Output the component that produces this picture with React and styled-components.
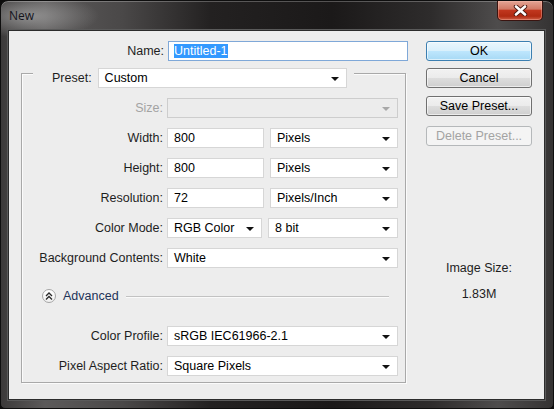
import styled, { createGlobalStyle } from 'styled-components';

const GlobalStyle = createGlobalStyle`
  html, body {
    margin: 0;
    padding: 0;
    background: #0c0c0c;
  }
  body {
    font-family: 'Liberation Sans', Arial, sans-serif;
    font-size: 12.5px;
    color: #1e1e1e;
  }
  * { box-sizing: border-box; }
`;

const Window = styled.div`
  width: 554px;
  height: 409px;
  display: flex;
  flex-direction: column;
  border: 1px solid #0e0e0e;
  border-radius: 8px 8px 5px 5px;
  background:
    radial-gradient(ellipse 70px 22px at 28px 15px, rgba(170, 170, 170, 0.7), rgba(120, 120, 120, 0) 100%),
    linear-gradient(90deg, #3c3a3a 0%, #5c5a5a 8%, #4a4848 22%, #232121 38%, #1b1919 60%, #2e2c2c 78%, #4e4c4c 90%, #353333 100%);
  box-shadow: inset 0 1px 0 rgba(255, 255, 255, 0.25);
`;

const TitleBar = styled.div`
  height: 29px;
  display: flex;
  justify-content: space-between;
  align-items: flex-start;
  padding-left: 8px;
`;

const Title = styled.span`
  margin-top: 8px;
  font-family: 'Open Sans', 'Liberation Sans', sans-serif;
  font-size: 12px;
  line-height: 14px;
  color: #14141c;
`;

const CloseButton = styled.div`
  width: 46px;
  height: 20px;
  margin-right: 10px;
  display: flex;
  align-items: center;
  justify-content: center;
  border: 1px solid #3a1410;
  border-top: none;
  border-radius: 0 0 5px 5px;
  background: linear-gradient(180deg, #e4a494 0%, #d27a66 42%, #c0361e 50%, #b02a12 80%, #cf5f46 100%);
  box-shadow: inset 0 0 0 1px rgba(255, 200, 190, 0.35);
`;

const Client = styled.div`
  flex: 1;
  margin: 0 8px 8px 7px;
  display: flex;
  align-items: flex-start;
  padding-top: 10px;
  background: #ededed;
  border: 1px solid #2c2c2c;
  box-shadow: 0 0 0 1px #5a5a5a;
`;

const LeftPane = styled.div`
  padding-left: 12px;
  display: flex;
  flex-direction: column;
`;

const NameRow = styled.div`
  display: grid;
  grid-template-columns: 143px 240px;
  column-gap: 4px;
  align-items: center;
  height: 20px;
`;

const Label = styled.span`
  text-align: right;
  white-space: nowrap;
  color: ${props => (props.$disabled ? '#a3a3a3' : '#1e1e1e')};
`;

const Field = styled.div`
  height: 20px;
  width: ${props => props.$width || 'auto'};
  flex: ${props => (props.$width ? 'none' : '1')};
  display: flex;
  align-items: center;
  padding-left: 6px;
  background: #fff;
  border: 1px solid #d6d6d6;
  color: #000;
  white-space: nowrap;
`;

const NameField = styled(Field)`
  border-color: #7fa8d8;
  padding-left: 5px;
`;

const Selected = styled.span`
  background: #3399ff;
  color: #fff;
  line-height: 14px;
`;

const Select = styled(Field)`
  position: relative;
  background: ${props => (props.$disabled ? '#ececec' : '#fff')};
  border-color: ${props => (props.$disabled ? '#cdcdcd' : '#d6d6d6')};

  &::after {
    content: '';
    position: absolute;
    right: 7px;
    top: 8px;
    border-left: 4px solid transparent;
    border-right: 4px solid transparent;
    border-top: 4px solid ${props => (props.$disabled ? '#a8a8a8' : '#111')};
  }
`;

const Group = styled.div`
  margin-top: 12px;
  width: 385px;
  display: flex;
  flex-direction: column;
  padding: 0 6px 6px 0;
  border: 1px solid #a9a9a9;
  box-shadow: inset 1px 1px 0 #fbfbfb, 1px 1px 0 #fbfbfb;
`;

const PresetRow = styled.div`
  align-self: flex-start;
  height: 21px;
  margin: -7px 0 0 11px;
  padding: 0 7px 0 19px;
  display: flex;
  align-items: center;
  gap: 6px;
  background: #ededed;
`;

const Row = styled.div`
  display: grid;
  grid-template-columns: 141px 231px;
  column-gap: 4px;
  align-items: center;
  height: 20px;
  margin-top: ${props => props.$gap || 10}px;
`;

const Pair = styled.div`
  display: flex;
  gap: 6px;
`;

const AdvancedRow = styled.div`
  height: 20px;
  margin-top: 18px;
  padding: 0 10px 0 20px;
  display: flex;
  align-items: center;
  gap: 7px;
`;

const RoundIcon = styled.div`
  width: 14px;
  height: 14px;
  border-radius: 50%;
  display: flex;
  align-items: center;
  justify-content: center;
  background: linear-gradient(180deg, #ffffff 0%, #f0f0f0 100%);
  border: 1px solid #a6a6a6;
`;

const AdvancedText = styled.span`
  color: #1d3358;
`;

const Rule = styled.div`
  flex: 1;
  height: 1px;
  background: #c2c2c2;
  box-shadow: 0 1px 0 #fafafa;
`;

const RightPane = styled.div`
  margin-left: 18px;
  width: 106px;
  display: flex;
  flex-direction: column;
`;

const Button = styled.div`
  height: 20px;
  margin-top: ${props => props.$gap || 0}px;
  display: flex;
  align-items: center;
  justify-content: center;
  border-radius: 3px;
  border: 1px solid ${props => (props.$primary ? '#3c7fb1' : props.$disabled ? '#b5b8ba' : '#707070')};
  background: ${props =>
    props.$primary
      ? 'linear-gradient(180deg, #eaf6fd 0%, #d9f0fc 50%, #bee6fd 51%, #a7d9f5 100%)'
      : props.$disabled
      ? '#f4f4f4'
      : 'linear-gradient(180deg, #f2f2f2 0%, #ebebeb 50%, #dddddd 51%, #cfcfcf 100%)'};
  color: ${props => (props.$disabled ? '#a3a3a3' : '#000')};
  box-shadow: inset 0 0 0 1px ${props => (props.$disabled ? 'transparent' : 'rgba(255,255,255,0.6)')};
`;

const Info = styled.div`
  margin-top: ${props => props.$gap}px;
  text-align: center;
  line-height: 14px;
  color: #1e1e1e;
`;

const CloseGlyph = () => (
  <svg width="15" height="11" viewBox="0 0 15 11">
    <path d="M3 1.5 L12 9.5 M12 1.5 L3 9.5" stroke="#4a1810" strokeWidth="4.4" strokeLinecap="round" />
    <path d="M3 1.5 L12 9.5 M12 1.5 L3 9.5" stroke="#ffffff" strokeWidth="2.6" strokeLinecap="round" />
  </svg>
);

const ChevronsUp = () => (
  <svg width="8" height="8" viewBox="0 0 8 8">
    <polyline points="1,4 4,1 7,4" fill="none" stroke="#2a2a2a" strokeWidth="1.3" />
    <polyline points="1,7.5 4,4.5 7,7.5" fill="none" stroke="#2a2a2a" strokeWidth="1.3" />
  </svg>
);

const App = () => {
  return (
    <>
      <GlobalStyle />
      <Window>
        <TitleBar>
          <Title>New</Title>
          <CloseButton>
            <CloseGlyph />
          </CloseButton>
        </TitleBar>
        <Client>
          <LeftPane>
            <NameRow>
              <Label>Name:</Label>
              <NameField>
                <Selected>Untitled-1</Selected>
              </NameField>
            </NameRow>

            <Group>
              <PresetRow>
                <Label>Preset:</Label>
                <Select $width="249px">Custom</Select>
              </PresetRow>

              <Row>
                <Label $disabled>Size:</Label>
                <Select $disabled />
              </Row>

              <Row>
                <Label>Width:</Label>
                <Pair>
                  <Field $width="97px">800</Field>
                  <Select>Pixels</Select>
                </Pair>
              </Row>

              <Row>
                <Label>Height:</Label>
                <Pair>
                  <Field $width="97px">800</Field>
                  <Select>Pixels</Select>
                </Pair>
              </Row>

              <Row>
                <Label>Resolution:</Label>
                <Pair>
                  <Field $width="97px">72</Field>
                  <Select>Pixels/Inch</Select>
                </Pair>
              </Row>

              <Row>
                <Label>Color Mode:</Label>
                <Pair>
                  <Select $width="95px">RGB Color</Select>
                  <Select>8 bit</Select>
                </Pair>
              </Row>

              <Row>
                <Label>Background Contents:</Label>
                <Select>White</Select>
              </Row>

              <AdvancedRow>
                <RoundIcon>
                  <ChevronsUp />
                </RoundIcon>
                <AdvancedText>Advanced</AdvancedText>
                <Rule />
              </AdvancedRow>

              <Row $gap={20}>
                <Label>Color Profile:</Label>
                <Select>sRGB IEC61966-2.1</Select>
              </Row>

              <Row>
                <Label>Pixel Aspect Ratio:</Label>
                <Select>Square Pixels</Select>
              </Row>
            </Group>
          </LeftPane>

          <RightPane>
            <Button $primary>OK</Button>
            <Button $gap={7}>Cancel</Button>
            <Button $gap={8}>Save Preset...</Button>
            <Button $gap={10} $disabled>Delete Preset...</Button>
            <Info $gap={115}>Image Size:</Info>
            <Info $gap={12}>1.83M</Info>
          </RightPane>
        </Client>
      </Window>
    </>
  );
};

export default App;
